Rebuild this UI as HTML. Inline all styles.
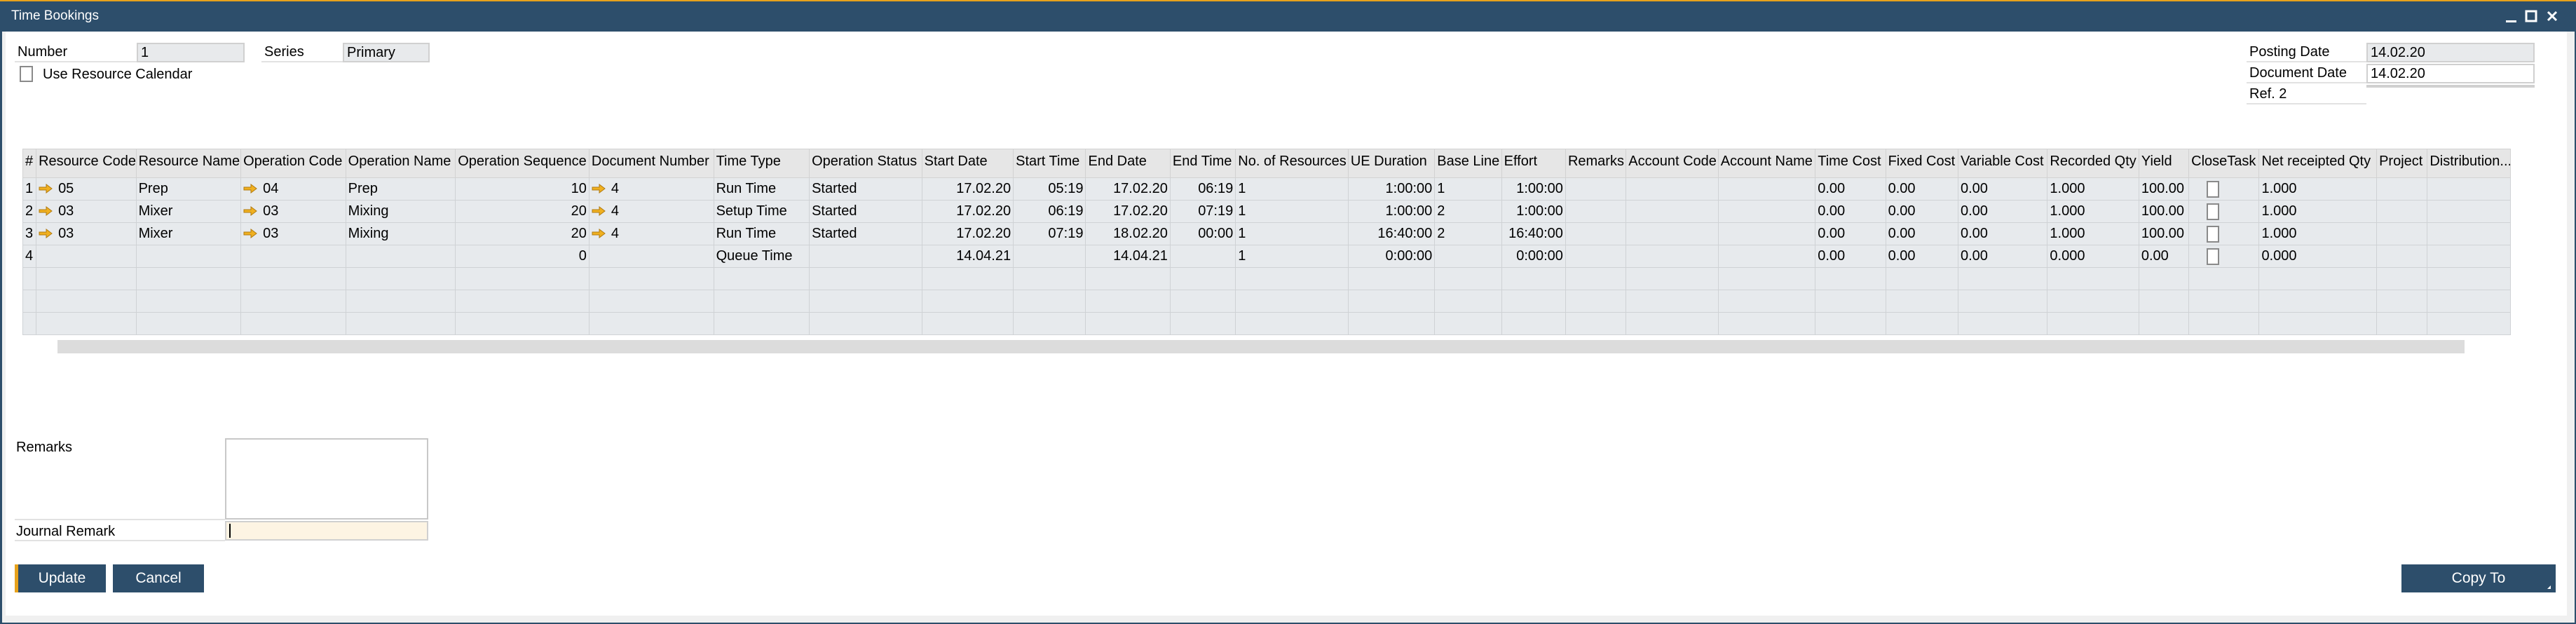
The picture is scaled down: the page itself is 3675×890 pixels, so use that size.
<!DOCTYPE html>
<html><head><meta charset="utf-8"><style>
*{margin:0;padding:0;box-sizing:border-box}
body{width:3675px;height:890px;background:#f0f0f0;font-family:"Liberation Sans",sans-serif;font-size:20px;color:#000;position:relative;overflow:hidden}
.a{position:absolute}
.lbl{position:absolute;border-bottom:2px solid #e2e2e2;line-height:26px;padding-left:4px}
.fld{position:absolute;border:2px solid #d0d0d0;line-height:24px;padding-left:4px;background:#fff}
.g{background:#e8eaec}
table{position:absolute;left:32px;top:212px;border-collapse:collapse;table-layout:fixed;width:3550px}
td{border:1px solid #cfd2d5;height:32px;padding:0 3px;white-space:nowrap;overflow:hidden;background:#e7eaed}
tr.h td{background:#e6e6e6;height:41px;vertical-align:top;padding-top:6px;border-color:#d2d2d2}
.r{text-align:right}
.arr{display:inline-block;width:20px;height:14px;vertical-align:-1px;margin-right:8px}
.cb{display:inline-block;width:18px;height:24px;border:2px solid #8a8a8a;background:#fff;vertical-align:middle;margin-left:22px}
.btn{position:absolute;background:#2d4e6b;color:#fff;text-align:center;line-height:40px;font-size:21px}
</style></head><body>
<div class="a" style="left:0;top:0;width:3675px;height:890px;background:#2d4e6b"></div>
<div class="a" style="left:0;top:0;width:3675px;height:2px;background:#e7a21c"></div>
<div class="a" style="left:16px;top:12px;color:#fff;font-size:19px">Time Bookings</div>
<svg class="a" style="left:3570px;top:12px" width="90" height="22"><rect x="5" y="17" width="15" height="3" fill="#fff"/><rect x="34" y="4" width="14" height="14" fill="none" stroke="#fff" stroke-width="3"/><path d="M65 5 L77 17 M77 5 L65 17" stroke="#fff" stroke-width="3"/></svg>
<div class="a" style="left:3px;top:45px;width:3670px;height:843px;background:#f0f0f0"></div>
<div class="a" style="left:8px;top:45px;width:3654px;height:833px;background:#fff"></div>

<div class="lbl" style="left:21px;top:61px;width:174px">Number</div>
<div class="fld g" style="left:195px;top:61px;width:154px">1</div>
<div class="lbl" style="left:373px;top:61px;width:116px">Series</div>
<div class="fld g" style="left:489px;top:61px;width:124px">Primary</div>
<div class="a" style="left:28px;top:94px;width:19px;height:23px;border:2px solid #8a8a8a"></div>
<div class="a" style="left:61px;top:94px;line-height:24px">Use Resource Calendar</div>

<div class="lbl" style="left:3205px;top:61px;width:171px">Posting Date</div>
<div class="fld g" style="left:3376px;top:61px;width:240px">14.02.20</div>
<div class="lbl" style="left:3205px;top:91px;width:171px">Document Date</div>
<div class="fld" style="left:3376px;top:91px;width:240px">14.02.20</div>
<div class="lbl" style="left:3205px;top:121px;width:171px">Ref. 2</div>
<div class="fld" style="left:3376px;top:121px;width:240px"></div>

<svg width="0" height="0" style="position:absolute"><defs><symbol id="ar" viewBox="0 0 20 14"><path d="M1 5 H11 V1 L19 7 L11 13 V9 H1 Z" fill="#f0b020" stroke="#b07a10" stroke-width="1"/></symbol></defs></svg>

<table>
<colgroup>
<col style="width:19px"><col style="width:142px"><col style="width:149px"><col style="width:149px"><col style="width:156px"><col style="width:190px"><col style="width:177px"><col style="width:136px"><col style="width:160px"><col style="width:130px"><col style="width:103px"><col style="width:120px"><col style="width:93px"><col style="width:160px"><col style="width:123px"><col style="width:95px"><col style="width:91px"><col style="width:86px"><col style="width:131px"><col style="width:138px"><col style="width:100px"><col style="width:103px"><col style="width:127px"><col style="width:130px"><col style="width:71px"><col style="width:100px"><col style="width:167px"><col style="width:72px"><col style="width:118px">
</colgroup>
<tr class="h"><td>#</td><td>Resource Code</td><td>Resource Name</td><td>Operation Code</td><td>Operation Name</td><td>Operation Sequence</td><td>Document Number</td><td>Time Type</td><td>Operation Status</td><td>Start Date</td><td>Start Time</td><td>End Date</td><td>End Time</td><td>No. of Resources</td><td>UE Duration</td><td>Base Line</td><td>Effort</td><td>Remarks</td><td>Account Code</td><td>Account Name</td><td>Time Cost</td><td>Fixed Cost</td><td>Variable Cost</td><td>Recorded Qty</td><td>Yield</td><td>CloseTask</td><td>Net receipted Qty</td><td>Project</td><td>Distribution...</td></tr>
<tr><td>1</td><td><svg class="arr"><use href="#ar"/></svg>05</td><td>Prep</td><td><svg class="arr"><use href="#ar"/></svg>04</td><td>Prep</td><td class="r">10</td><td><svg class="arr"><use href="#ar"/></svg>4</td><td>Run Time</td><td>Started</td><td class="r">17.02.20</td><td class="r">05:19</td><td class="r">17.02.20</td><td class="r">06:19</td><td>1</td><td class="r">1:00:00</td><td>1</td><td class="r">1:00:00</td><td></td><td></td><td></td><td>0.00</td><td>0.00</td><td>0.00</td><td>1.000</td><td>100.00</td><td><span class="cb"></span></td><td>1.000</td><td></td><td></td></tr>
<tr><td>2</td><td><svg class="arr"><use href="#ar"/></svg>03</td><td>Mixer</td><td><svg class="arr"><use href="#ar"/></svg>03</td><td>Mixing</td><td class="r">20</td><td><svg class="arr"><use href="#ar"/></svg>4</td><td>Setup Time</td><td>Started</td><td class="r">17.02.20</td><td class="r">06:19</td><td class="r">17.02.20</td><td class="r">07:19</td><td>1</td><td class="r">1:00:00</td><td>2</td><td class="r">1:00:00</td><td></td><td></td><td></td><td>0.00</td><td>0.00</td><td>0.00</td><td>1.000</td><td>100.00</td><td><span class="cb"></span></td><td>1.000</td><td></td><td></td></tr>
<tr><td>3</td><td><svg class="arr"><use href="#ar"/></svg>03</td><td>Mixer</td><td><svg class="arr"><use href="#ar"/></svg>03</td><td>Mixing</td><td class="r">20</td><td><svg class="arr"><use href="#ar"/></svg>4</td><td>Run Time</td><td>Started</td><td class="r">17.02.20</td><td class="r">07:19</td><td class="r">18.02.20</td><td class="r">00:00</td><td>1</td><td class="r">16:40:00</td><td>2</td><td class="r">16:40:00</td><td></td><td></td><td></td><td>0.00</td><td>0.00</td><td>0.00</td><td>1.000</td><td>100.00</td><td><span class="cb"></span></td><td>1.000</td><td></td><td></td></tr>
<tr><td>4</td><td></td><td></td><td></td><td></td><td class="r">0</td><td></td><td>Queue Time</td><td></td><td class="r">14.04.21</td><td></td><td class="r">14.04.21</td><td></td><td>1</td><td class="r">0:00:00</td><td></td><td class="r">0:00:00</td><td></td><td></td><td></td><td>0.00</td><td>0.00</td><td>0.00</td><td>0.000</td><td>0.00</td><td><span class="cb"></span></td><td>0.000</td><td></td><td></td></tr>
<tr><td></td><td></td><td></td><td></td><td></td><td></td><td></td><td></td><td></td><td></td><td></td><td></td><td></td><td></td><td></td><td></td><td></td><td></td><td></td><td></td><td></td><td></td><td></td><td></td><td></td><td></td><td></td><td></td><td></td></tr>
<tr><td></td><td></td><td></td><td></td><td></td><td></td><td></td><td></td><td></td><td></td><td></td><td></td><td></td><td></td><td></td><td></td><td></td><td></td><td></td><td></td><td></td><td></td><td></td><td></td><td></td><td></td><td></td><td></td><td></td></tr>
<tr><td></td><td></td><td></td><td></td><td></td><td></td><td></td><td></td><td></td><td></td><td></td><td></td><td></td><td></td><td></td><td></td><td></td><td></td><td></td><td></td><td></td><td></td><td></td><td></td><td></td><td></td><td></td><td></td><td></td></tr>
</table>
<div class="a" style="left:82px;top:485px;width:3434px;height:19px;background:#dcdcdc"></div>

<div class="a" style="left:23px;top:627px">Remarks</div>
<div class="a" style="left:321px;top:625px;width:290px;height:116px;border:2px solid #c8c8c8;background:#fff"></div>
<div class="a" style="left:21px;top:740px;width:300px;height:2px;background:#e2e2e2"></div>
<div class="a" style="left:23px;top:745px;line-height:26px">Journal Remark</div>
<div class="a" style="left:21px;top:770px;width:300px;height:2px;background:#e2e2e2"></div>
<div class="a" style="left:321px;top:743px;width:290px;height:28px;border:2px solid #d0d0d0;background:#fdf4e3"></div>
<div class="a" style="left:327px;top:747px;width:2px;height:20px;background:#000"></div>

<div class="btn" style="left:21px;top:805px;width:130px;border-left:5px solid #e7a21c">Update</div>
<div class="btn" style="left:161px;top:805px;width:130px">Cancel</div>
<div class="btn" style="left:3426px;top:805px;width:220px">Copy To<span style="position:absolute;right:7px;bottom:5px;width:0;height:0;border-left:5px solid transparent;border-bottom:5px solid #fff"></span></div>
</body></html>
